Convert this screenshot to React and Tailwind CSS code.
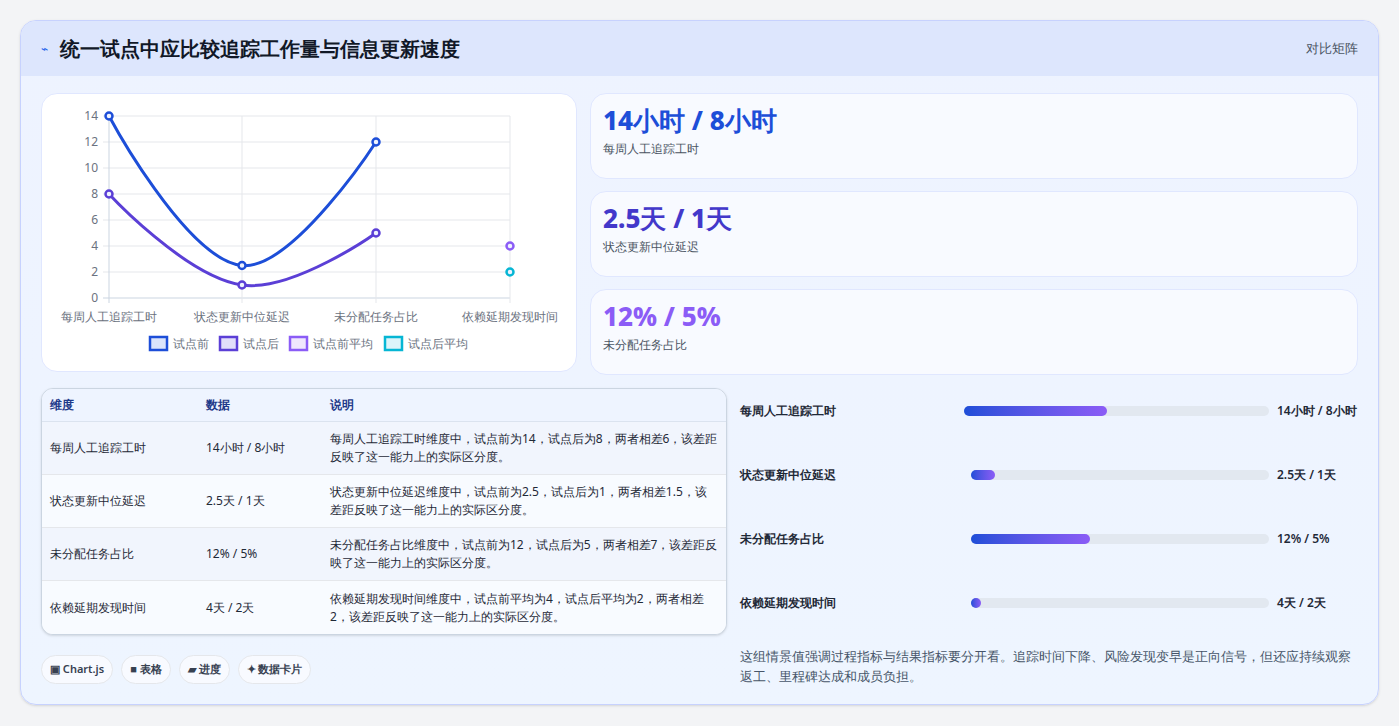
import React from "react";

const rows = [
  ["每周人工追踪工时", "14小时 / 8小时", "每周人工追踪工时维度中，试点前为14，试点后为8，两者相差6，该差距反映了这一能力上的实际区分度。"],
  ["状态更新中位延迟", "2.5天 / 1天", "状态更新中位延迟维度中，试点前为2.5，试点后为1，两者相差1.5，该差距反映了这一能力上的实际区分度。"],
  ["未分配任务占比", "12% / 5%", "未分配任务占比维度中，试点前为12，试点后为5，两者相差7，该差距反映了这一能力上的实际区分度。"],
  ["依赖延期发现时间", "4天 / 2天", "依赖延期发现时间维度中，试点前平均为4，试点后平均为2，两者相差2，该差距反映了这一能力上的实际区分度。"],
];

const bars = [
  ["每周人工追踪工时", "14小时 / 8小时", 47, "ml-0"],
  ["状态更新中位延迟", "2.5天 / 1天", 8, "ml-[7px]"],
  ["未分配任务占比", "12% / 5%", 40, "ml-[7px]"],
  ["依赖延期发现时间", "4天 / 2天", 3.5, "ml-[7px]"],
];

const Chart = () => {
  const ys = [14, 12, 10, 8, 6, 4, 2, 0];
  const xs = [107, 240, 374, 508];
  const cats = ["每周人工追踪工时", "状态更新中位延迟", "未分配任务占比", "依赖延期发现时间"];
  const y = (v) => 297 - v * 13;
  const dot = (cx, cy, c, k) => (
    <circle key={k} cx={cx} cy={cy} r="3.5" fill="#eef2ff" stroke={c} strokeWidth="2.5" />
  );
  return (
    <svg width="535" height="278" viewBox="40 93 535 278" className="block">
      {ys.map((v) => (
        <g key={v}>
          <line x1="101" x2="508" y1={y(v)} y2={y(v)} stroke={v === 0 ? "#cbd5e1" : "#e5e7eb"} />
          <text x="96" y={y(v) + 4} textAnchor="end" fontSize="12" fill="#6b7280">{v}</text>
        </g>
      ))}
      {xs.map((x, i) => (
        <g key={x}>
          <line x1={x} x2={x} y1="115" y2="302" stroke={i === 0 ? "#cbd5e1" : "#e5e7eb"} />
          <text x={x} y="320" textAnchor="middle" fontSize="12" fill="#6b7280">{cats[i]}</text>
        </g>
      ))}
      <path d="M107,115 C107,115 184.2,259.1 240,264.5 C290.7,269.4 374,141 374,141" fill="none" stroke="#1d4ed8" strokeWidth="3" />
      <path d="M107,193 C107,193 183.7,275.8 240,284 C290.5,291.4 374,232 374,232" fill="none" stroke="#5b3fd6" strokeWidth="3" />
      {[[107, 14], [240, 2.5], [374, 12]].map(([x, v], i) => dot(x, y(v), "#1d4ed8", "b" + i))}
      {[[107, 8], [240, 1], [374, 5]].map(([x, v], i) => dot(x, y(v), "#5b3fd6", "a" + i))}
      {dot(508, y(4), "#8b5cf6", "ab")}
      {dot(508, y(2), "#06b6d4", "aa")}
      {[
        [147, "#1d4ed8", "#dbe4fb", "试点前"],
        [217, "#5b3fd6", "#e2defa", "试点后"],
        [287, "#8b5cf6", "#efe7fd", "试点前平均"],
        [382, "#06b6d4", "#dcf4fa", "试点后平均"],
      ].map(([x, c, f, t]) => (
        <g key={t}>
          <rect x={x + 1} y="336" width="17" height="13" fill={f} stroke={c} strokeWidth="2.5" />
          <text x={x + 24} y="347" fontSize="12" fill="#6b7280">{t}</text>
        </g>
      ))}
    </svg>
  );
};

export default function App() {
  return (
    <div className="w-full min-h-[726px] bg-[#f3f4f6] p-5 font-['Noto_Sans_CJK_SC','Noto_Sans',sans-serif] text-[#1f2937]">
      <div className="rounded-2xl border border-[#c7d2fe] bg-gradient-to-b from-[#eef3ff] to-[#eef5ff] overflow-hidden h-[685px] shadow-sm">
        <div className="h-[55px] bg-[#dde6fd] flex items-center justify-between px-5">
          <div className="flex items-center gap-3">
            <span className="text-[#2563eb] text-xs">⌁</span>
            <span className="text-[20px] font-bold text-[#111827]">统一试点中应比较追踪工作量与信息更新速度</span>
          </div>
          <span className="text-[13px] text-[#4b5563]">对比矩阵</span>
        </div>
        <div className="px-5 pt-[17px]">
          <div className="flex gap-[13px]">
            <div className="w-[536px] h-[279px] bg-white rounded-2xl border border-[#e0e7ff] overflow-hidden">
              <Chart />
            </div>
            <div className="flex-1 flex flex-col gap-3">
              {[
                ["14小时 / 8小时", "每周人工追踪工时", "text-[#1d4ed8]"],
                ["2.5天 / 1天", "状态更新中位延迟", "text-[#4338ca]"],
                ["12% / 5%", "未分配任务占比", "text-[#8b5cf6]"],
              ].map(([v, l, c]) => (
                <div key={l} className="h-[86px] bg-[#f8faff] rounded-2xl border border-[#e0e7ff] px-3 pt-[8px]">
                  <div className={`text-[26px] font-extrabold leading-[36px] ${c}`}>{v}</div>
                  <div className="text-[12px] text-[#4b5563] mt-[2px]">{l}</div>
                </div>
              ))}
            </div>
          </div>
          <div className="flex gap-[13px] mt-[13px]">
            <div className="w-[686px]">
              <div className="rounded-xl border border-[#cbd5e1] overflow-hidden bg-[#f8faff] shadow-sm">
                <div className="flex h-[33px] items-center bg-[#eef4ff] border-b border-[#dbe3ef] text-[12px] font-semibold text-[#1e3a8a]">
                  <div className="w-[164px] pl-2">维度</div>
                  <div className="w-[124px]">数据</div>
                  <div className="flex-1">说明</div>
                </div>
                {rows.map((r, i) => (
                  <div key={r[0]} className={`flex h-[53px] items-center text-[12px] ${i < 3 ? "border-b border-[#e5e7eb]" : ""} ${i % 2 ? "bg-[#f8fbff]" : "bg-[#f1f5fd]"}`}>
                    <div className="w-[164px] pl-2 text-[#1f2937]">{r[0]}</div>
                    <div className="w-[124px] text-[#1f2937]">{r[1]}</div>
                    <div className="flex-1 pr-2 leading-[18px] text-[#1f2937]">{r[2]}</div>
                  </div>
                ))}
              </div>
              <div className="flex gap-[8px] mt-[20px] text-[11px] font-semibold text-[#374151]">
                {["▣ Chart.js", "■ 表格", "▰ 进度", "✦ 数据卡片"].map((t) => (
                  <span key={t} className="h-[29px] px-2 flex items-center rounded-full bg-[#f8faff] border border-[#e5e7eb]">{t}</span>
                ))}
              </div>
            </div>
            <div className="flex-1 mt-[-9px]">
              {bars.map(([l, v, p, m]) => (
                <div key={l} className="h-[64px] flex items-center text-[12px] font-semibold text-[#1f2937]">
                  <div className="w-[224px] shrink-0">{l}</div>
                  <div className={`flex-1 h-[10px] rounded-full bg-[#e2e8f0] ${m}`}>
                    <div className="h-full rounded-full bg-gradient-to-r from-[#1d4ed8] to-[#8b5cf6] min-w-[10px]" style={{ width: `${p}%` }} />
                  </div>
                  <div className="ml-2 w-[81px] shrink-0 whitespace-nowrap">{v}</div>
                </div>
              ))}
              <p className="mt-[11px] text-[13px] leading-[20px] text-[#475569]">
                这组情景值强调过程指标与结果指标要分开看。追踪时间下降、风险发现变早是正向信号，但还应持续观察返工、里程碑达成和成员负担。
              </p>
            </div>
          </div>
        </div>
      </div>
    </div>
  );
}
